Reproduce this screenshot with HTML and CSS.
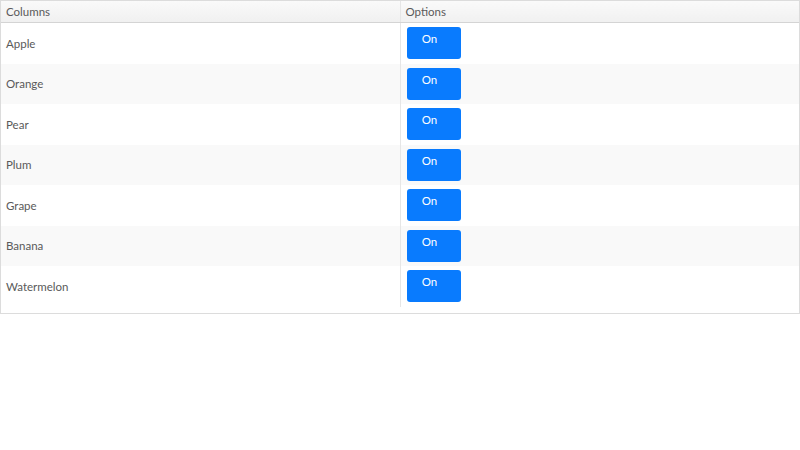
FILE: index.html
```html
<!DOCTYPE html>
<html lang="en">
<head>
    <meta charset="UTF-8">
    <title>Columns</title>
    <link rel="stylesheet" href="styles.css">
</head>
<body>
    <div class="grid">
        <table class="grid-table">
            <thead>
                <tr>
                    <th>Columns</th>
                    <th>Options</th>
                </tr>
            </thead>
            <tbody>
                <tr><td>Apple</td><td><button class="toggle">On</button></td></tr>
                <tr><td>Orange</td><td><button class="toggle">On</button></td></tr>
                <tr><td>Pear</td><td><button class="toggle">On</button></td></tr>
                <tr><td>Plum</td><td><button class="toggle">On</button></td></tr>
                <tr><td>Grape</td><td><button class="toggle">On</button></td></tr>
                <tr><td>Banana</td><td><button class="toggle">On</button></td></tr>
                <tr><td>Watermelon</td><td><button class="toggle">On</button></td></tr>
            </tbody>
        </table>
    </div>
</body>
</html>
```

FILE: styles.css
```css
body {
    margin: 0;
    font-family: Lato, "Liberation Sans", sans-serif;
    font-size: 11.5px;
    color: #5a5a5a;
    background: white;
}

.grid {
    border: 1px solid #dcdcdc;
    padding-bottom: 6px;
}

.grid-table {
    width: 100%;
    border-collapse: collapse;
}

.grid-table th {
    height: 21px;
    padding: 0 5px;
    text-align: left;
    font-weight: normal;
    color: #5a5a5a;
    background: linear-gradient(#fafafa, #f0f0f0);
    border-bottom: 1px solid #d4d4d4;
    line-height: 21px;
}

.grid-table th + th,
.grid-table td + td {
    border-left: 1px solid #e6e6e6;
}

.grid-table td {
    width: 50%;
    height: 40.5px;
    padding: 0 5px;
    vertical-align: middle;
}

.grid-table td + td {
    padding-left: 6px;
}

.grid-table tbody tr:nth-child(even) {
    background: #f9f9f9;
}

.toggle {
    display: flex;
    justify-content: center;
    align-items: flex-start;
    width: 54px;
    height: 32px;
    padding: 5px 8px 0 0;
    border: none;
    border-radius: 3px;
    background: #097bfe;
    color: white;
    font-family: inherit;
    font-size: 11.5px;
    line-height: 13px;
}
```
